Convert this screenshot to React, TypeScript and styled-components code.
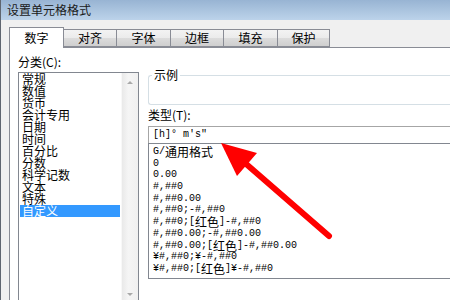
import React from "react";
import styled, { createGlobalStyle } from "styled-components";

const Global = createGlobalStyle`
  html, body { margin: 0; padding: 0; background: #f0f0f0; overflow: hidden; }
  body { font-family: "Noto Sans CJK SC", "Liberation Sans", sans-serif; font-size: 12px; color: #000; }
`;

const Window = styled.div`
  position: relative;
  width: 450px;
  height: 300px;
  overflow: hidden;
  box-sizing: border-box;
  border-left: 1px solid #5f6670;
  background: #f0f0f0;
`;

const TitleBar = styled.div`
  height: 20px;
  padding-left: 6px;
  line-height: 20px;
  font-size: 12px;
  color: #1a1a1a;
  background: linear-gradient(#98b4d3, #bcd3ea);
`;

const TabStrip = styled.div`
  display: flex;
  align-items: flex-end;
  height: 27px;
  padding-left: 8px;
`;

const Tab = styled.div<{ $active?: boolean; $w: number }>`
  position: relative;
  box-sizing: border-box;
  width: ${(p) => p.$w}px;
  height: ${(p) => (p.$active ? 21 : 18)}px;
  margin-bottom: ${(p) => (p.$active ? -1 : 0)}px;
  margin-left: ${(p) => (p.$active ? 0 : -1)}px;
  z-index: ${(p) => (p.$active ? 2 : 1)};
  border: 1px solid #898c95;
  border-bottom: ${(p) => (p.$active ? "none" : "1px solid #898c95")};
  background: ${(p) => (p.$active ? "#ffffff" : "linear-gradient(#f3f3f3 0%, #ebebeb 50%, #dcdcdc 51%, #cfcfcf 100%)")};
  display: flex;
  justify-content: center;
  padding-top: ${(p) => (p.$active ? 3 : 1)}px;
  font-size: 12px;
  line-height: 14px;
  &:first-child { margin-left: 0; }
`;

const Panel = styled.div`
  position: relative;
  margin-left: 8px;
  height: 253px;
  background: #fff;
  border-top: 1px solid #898c95;
  border-left: 1px solid #898c95;
  display: grid;
  grid-template-columns: 121px 1fr;
  column-gap: 9px;
  padding-left: 8px;
`;

const Column = styled.div`
  display: flex;
  flex-direction: column;
`;

const Label = styled.div<{ $top: number }>`
  margin-top: ${(p) => p.$top}px;
  height: 14px;
  line-height: 14px;
  font-size: 12px;
  white-space: nowrap;
`;

const CategoryBox = styled.div`
  margin-top: 3px;
  height: 231px;
  box-sizing: border-box;
  border: 1px solid #828790;
  display: flex;
`;

const CategoryItems = styled.div`
  flex: 1;
  padding: 0 1px;
`;

const CategoryItem = styled.div<{ $sel?: boolean }>`
  height: 12px;
  line-height: 12px;
  font-size: 12px;
  padding-left: 2px;
  white-space: nowrap;
  background: ${(p) => (p.$sel ? "#3399ff" : "transparent")};
  color: ${(p) => (p.$sel ? "#fff" : "#000")};
`;

const ScrollBar = styled.div`
  width: 17px;
  background: linear-gradient(90deg, #e9e9e9, #f5f5f5 40%, #f0f0f0);
  border-left: 1px solid #f8f8f8;
  display: flex;
  flex-direction: column;
  justify-content: space-between;
  align-items: center;
  padding: 8px 0 6px;
  box-sizing: border-box;
`;

const Arrow = styled.div<{ $down?: boolean }>`
  width: 0;
  height: 0;
  border-left: 3px solid transparent;
  border-right: 3px solid transparent;
  ${(p) => (p.$down ? "border-top: 3px solid #a9a9a9;" : "border-bottom: 3px solid #a9a9a9;")}
`;

const GroupBox = styled.div`
  position: relative;
  margin-top: 27px;
  height: 30px;
  box-sizing: border-box;
  border: 1px solid #d5dfe5;
  border-right: none;
  border-radius: 3px 0 0 3px;
`;

const Legend = styled.span`
  position: absolute;
  top: -7px;
  left: 3px;
  padding: 0 2px;
  background: #fff;
  font-size: 12px;
  line-height: 12px;
`;

const TypeInput = styled.div`
  margin-top: 4px;
  height: 17px;
  box-sizing: border-box;
  border: 1px solid #a6a6a6;
  border-right: none;
  border-bottom: none;
  padding-left: 4px;
  font-family: "Liberation Mono", "Noto Sans CJK SC", monospace;
  font-size: 10px;
  line-height: 15px;
  white-space: nowrap;
`;

const TypeList = styled.div`
  height: 136px;
  box-sizing: border-box;
  border: 1px solid #828790;
  border-right: none;
  padding: 2px 0 0 4px;
`;

const TypeItem = styled.div`
  height: 11.7px;
  line-height: 11.7px;
  font-family: "Liberation Mono", "Noto Sans CJK SC", monospace;
  font-size: 10px;
  white-space: nowrap;
`;

const Cjk = styled.span`
  display: inline-block;
  vertical-align: top;
  height: 11.7px;
  line-height: 11.7px;
  font-family: "Noto Sans CJK SC", sans-serif;
  font-size: 12px;
`;

const Overlay = styled.svg`
  position: absolute;
  left: 0;
  top: 0;
  pointer-events: none;
  z-index: 5;
`;

const mixed = (s: string) =>
  s.split(/([\u3000-\u9fff]+)/).map((p, i) =>
    /[\u3000-\u9fff]/.test(p) ? <Cjk key={i}>{p}</Cjk> : <React.Fragment key={i}>{p}</React.Fragment>
  );

const tabs: [string, number][] = [
  ["数字", 55],
  ["对齐", 54],
  ["字体", 55],
  ["边框", 54],
  ["填充", 55],
  ["保护", 53],
];

const categories = ["常规", "数值", "货币", "会计专用", "日期", "时间", "百分比", "分数", "科学记数", "文本", "特殊", "自定义"];

const formats = [
  "G/通用格式",
  "0",
  "0.00",
  "#,##0",
  "#,##0.00",
  "#,##0;-#,##0",
  "#,##0;[红色]-#,##0",
  "#,##0.00;-#,##0.00",
  "#,##0.00;[红色]-#,##0.00",
  "¥#,##0;¥-#,##0",
  "¥#,##0;[红色]¥-#,##0",
];

export default function App() {
  return (
    <>
      <Global />
      <Window>
        <TitleBar>设置单元格格式</TitleBar>
        <TabStrip>
          {tabs.map(([t, w], i) => (
            <Tab key={t} $active={i === 0} $w={w}>
              {t}
            </Tab>
          ))}
        </TabStrip>
        <Panel>
          <Column>
            <Label $top={7}>分类(C):</Label>
            <CategoryBox>
              <CategoryItems>
                {categories.map((c) => (
                  <CategoryItem key={c} $sel={c === "自定义"}>
                    {c}
                  </CategoryItem>
                ))}
              </CategoryItems>
              <ScrollBar>
                <Arrow />
                <Arrow $down />
              </ScrollBar>
            </CategoryBox>
          </Column>
          <Column>
            <GroupBox>
              <Legend>示例</Legend>
            </GroupBox>
            <Label $top={3}>类型(T):</Label>
            <TypeInput>[h]° m′s″</TypeInput>
            <TypeList>
              {formats.map((f) => (
                <TypeItem key={f}>{mixed(f)}</TypeItem>
              ))}
            </TypeList>
          </Column>
        </Panel>
        <Overlay width="450" height="300" viewBox="0 0 450 300">
          <line x1="328" y1="236" x2="244" y2="163" stroke="#ff0000" strokeWidth="6" strokeLinecap="round" />
          <polygon points="220,143 236,176 256,153" fill="#ff0000" />
        </Overlay>
      </Window>
    </>
  );
}
